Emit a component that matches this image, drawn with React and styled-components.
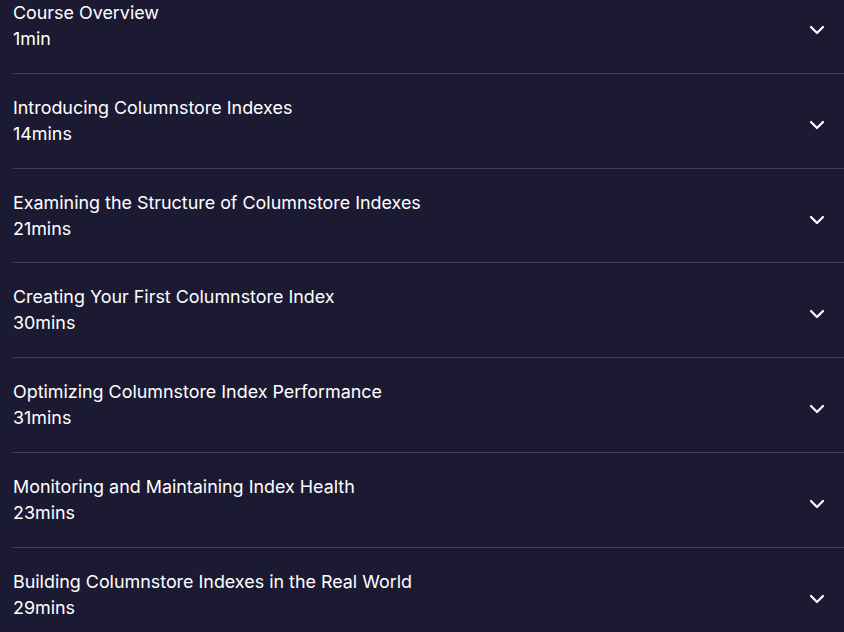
import React from "react";
import styled, { createGlobalStyle } from "styled-components";

const modules = [
  { title: "Course Overview", duration: "1min" },
  { title: "Introducing Columnstore Indexes", duration: "14mins" },
  { title: "Examining the Structure of Columnstore Indexes", duration: "21mins" },
  { title: "Creating Your First Columnstore Index", duration: "30mins" },
  { title: "Optimizing Columnstore Index Performance", duration: "31mins" },
  { title: "Monitoring and Maintaining Index Health", duration: "23mins" },
  { title: "Building Columnstore Indexes in the Real World", duration: "29mins" },
];

const GlobalStyle = createGlobalStyle`
  html, body {
    margin: 0;
    padding: 0;
    background: #1c1a33;
    overflow: hidden;
  }
  body {
    font-family: "Inter", "Liberation Sans", sans-serif;
    color: #ffffff;
  }
`;

const Page = styled.div`
  width: 844px;
  height: 632px;
  overflow: hidden;
  background: #1c1a33;
`;

const List = styled.ul`
  list-style: none;
  margin: -21px 0 0 13px;
  padding: 0;
`;

const Row = styled.li`
  display: flex;
  align-items: flex-start;
  justify-content: space-between;
  padding: 21px 0;
  height: 51.8px;
  border-bottom: 1px solid #3d3b66;
  cursor: pointer;
`;

const TextGroup = styled.div`
  display: flex;
  flex-direction: column;
`;

const Title = styled.span`
  font-size: 17.9px;
  line-height: 26px;
  font-weight: 400;
  color: #ffffff;
`;

const Duration = styled.span`
  font-size: 17.9px;
  line-height: 26px;
  font-weight: 400;
  color: #ffffff;
`;

const Chevron = styled.svg`
  width: 16px;
  height: 10px;
  margin: 25px 19px 0 0;
  flex-shrink: 0;
`;

const App = () => (
  <Page>
    <GlobalStyle />
    <List>
      {modules.map((m) => (
        <Row key={m.title}>
          <TextGroup>
            <Title>{m.title}</Title>
            <Duration>{m.duration}</Duration>
          </TextGroup>
          <Chevron viewBox="0 0 16 10" aria-hidden="true">
            <path
              d="M2 2 L8 8 L14 2"
              fill="none"
              stroke="#ffffff"
              strokeWidth="2.2"
              strokeLinecap="round"
              strokeLinejoin="round"
            />
          </Chevron>
        </Row>
      ))}
    </List>
  </Page>
);

export default App;
